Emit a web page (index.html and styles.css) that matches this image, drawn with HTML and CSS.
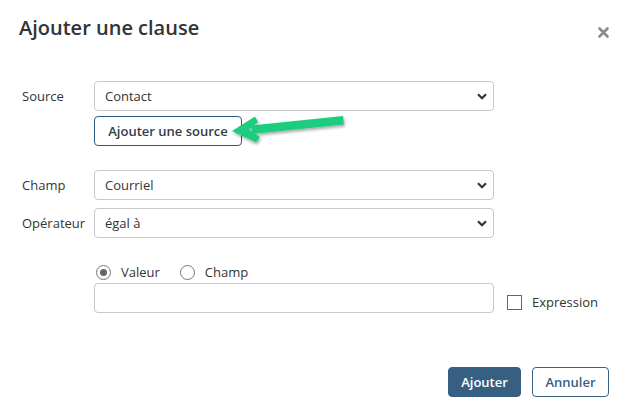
FILE: index.html
```html
<!DOCTYPE html>
<html lang="fr">
<head>
<meta charset="utf-8">
<title>Ajouter une clause</title>
<link rel="stylesheet" href="styles.css">
</head>
<body>
<div class="dialog">
  <div class="header">
    <h1 class="title">Ajouter une clause</h1>
    <svg class="close" width="11" height="11" viewBox="0 0 11 11"><path d="M1.5 1.5 L9.5 9.5 M9.5 1.5 L1.5 9.5" stroke="#8a8a8a" stroke-width="2.6" stroke-linecap="round"/></svg>
  </div>
  <div class="form">
    <div class="row">
      <label class="label">Source</label>
      <div class="select"><span>Contact</span><svg class="chev" width="10" height="7" viewBox="0 0 10 7"><path d="M1 1.2 L5 5.2 L9 1.2" fill="none" stroke="#333" stroke-width="2.2"/></svg></div>
    </div>
    <div class="row sub">
      <span class="label"></span>
      <button class="btn-outline-src">Ajouter une source</button>
    </div>
    <div class="row gap-lg">
      <label class="label">Champ</label>
      <div class="select"><span>Courriel</span><svg class="chev" width="10" height="7" viewBox="0 0 10 7"><path d="M1 1.2 L5 5.2 L9 1.2" fill="none" stroke="#333" stroke-width="2.2"/></svg></div>
    </div>
    <div class="row gap-sm">
      <label class="label">Opérateur</label>
      <div class="select"><span>égal à</span><svg class="chev" width="10" height="7" viewBox="0 0 10 7"><path d="M1 1.2 L5 5.2 L9 1.2" fill="none" stroke="#333" stroke-width="2.2"/></svg></div>
    </div>
    <div class="row radios">
      <span class="label"></span>
      <span class="radio-item"><span class="radio checked"></span>Valeur</span>
      <span class="radio-item"><span class="radio"></span>Champ</span>
    </div>
    <div class="row value-row">
      <span class="label"></span>
      <div class="input"></div>
      <span class="check-item"><span class="checkbox"></span>Expression</span>
    </div>
  </div>
  <div class="footer">
    <button class="btn-primary">Ajouter</button>
    <button class="btn-secondary">Annuler</button>
  </div>
</div>
<svg class="arrow" width="628" height="415" viewBox="0 0 628 415">
  <defs>
    <filter id="sh" x="-20%" y="-50%" width="140%" height="200%">
      <feDropShadow dx="1" dy="2" stdDeviation="1.5" flood-color="#000" flood-opacity="0.35"/>
    </filter>
  </defs>
  <g filter="url(#sh)" fill="#1ecd7f">
    <path d="M343 116 L344 124.5 L252 134 L251 125.5 Z"/>
    <path d="M232 131 L255 116.5 L258 122 L249 129.5 L260 137 L256 142.5 Z"/>
  </g>
</svg>
</body>
</html>
```
FILE: styles.css
```css
html, body {
  margin: 0;
  padding: 0;
  background: #fff;
}
body {
  font-family: "Open Sans", "Noto Sans", sans-serif;
  font-size: 13px;
  color: #333;
  width: 628px;
  height: 415px;
  position: relative;
  overflow: hidden;
}
.dialog {
  display: flex;
  flex-direction: column;
}
.header {
  display: flex;
  justify-content: space-between;
  align-items: center;
  padding: 14px 19px 0 19px;
  height: 28px;
}
.title {
  margin: 0;
  font-size: 20px;
  font-weight: 600;
  line-height: 28px;
  color: #333;
}
.close {
  display: block;
  margin-top: 8px;
}
.form {
  margin-top: 39px;
  padding-left: 22px;
  display: flex;
  flex-direction: column;
}
.row {
  display: flex;
  align-items: center;
}
.label {
  width: 72px;
  flex: none;
}
.select {
  box-sizing: border-box;
  width: 400px;
  height: 30px;
  border: 1px solid #c8c8c8;
  border-radius: 4px;
  display: flex;
  align-items: center;
  justify-content: space-between;
  padding: 0 6px 0 10px;
}
.chev { display: block; }
.sub { margin-top: 5px; }
.btn-outline-src {
  box-sizing: border-box;
  width: 148px;
  height: 30px;
  border: 1px solid #2e5a80;
  border-radius: 4px;
  background: #fff;
  font-family: inherit;
  font-size: 13px;
  font-weight: 600;
  color: #333d48;
  padding: 0;
}
.gap-lg { margin-top: 24px; }
.gap-sm { margin-top: 8px; }
.radios {
  margin-top: 26px;
  height: 16px;
}
.radio-item {
  display: inline-flex;
  align-items: center;
  margin-right: 18px;
}
.radio {
  box-sizing: border-box;
  width: 15px;
  height: 15px;
  border: 1px solid #777;
  border-radius: 50%;
  margin: 0 10px 0 2px;
  display: inline-flex;
  align-items: center;
  justify-content: center;
}
.radio.checked::after {
  content: "";
  width: 7px;
  height: 7px;
  border-radius: 50%;
  background: #666;
}
.value-row { margin-top: 3px; }
.input {
  box-sizing: border-box;
  width: 400px;
  height: 30px;
  border: 1px solid #c8c8c8;
  border-radius: 4px;
}
.check-item {
  display: inline-flex;
  align-items: center;
  margin-left: 13px;
  margin-top: 8px;
}
.checkbox {
  box-sizing: border-box;
  width: 15px;
  height: 15px;
  border: 1px solid #666;
  margin-right: 10px;
}
.footer {
  display: flex;
  justify-content: flex-end;
  gap: 11px;
  padding-right: 19px;
  margin-top: 54px;
}
.btn-primary, .btn-secondary {
  box-sizing: border-box;
  height: 30px;
  border-radius: 4px;
  font-family: inherit;
  font-size: 13px;
  font-weight: 600;
  padding: 0;
}
.btn-primary {
  width: 73px;
  background: #365f82;
  border: 1px solid #365f82;
  color: #fff;
}
.btn-secondary {
  width: 77px;
  background: #fff;
  border: 1px solid #365f82;
  color: #365f82;
}
.arrow {
  position: absolute;
  left: 0;
  top: 0;
  pointer-events: none;
}
```
